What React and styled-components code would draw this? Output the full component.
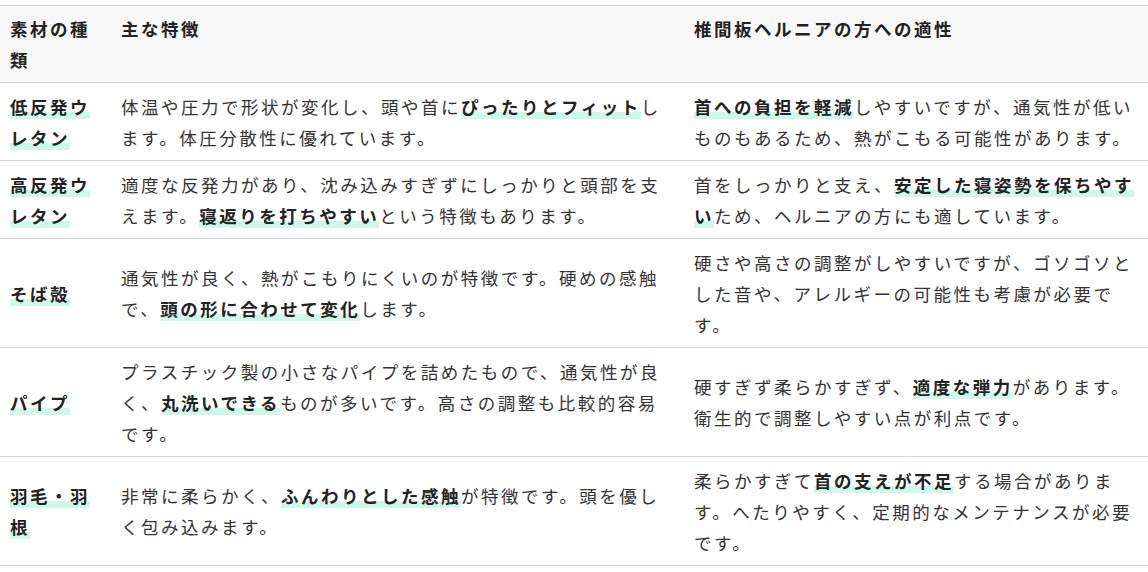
import React from 'react';
import styled, { createGlobalStyle } from 'styled-components';

const Global = createGlobalStyle`
  body {
    margin: 0;
    background: #fff;
    font-family: "Noto Sans CJK JP", "Noto Sans", sans-serif;
  }
`;

const Wrap = styled.div`
  padding-top: 5px;
`;

const Table = styled.table`
  width: 100%;
  table-layout: fixed;
  border-collapse: collapse;
  font-size: 17.5px;
  line-height: 31px;
  letter-spacing: 2.5px;
  color: #333;
`;

const Col = styled.col`
  width: ${props => props.w}px;
`;

const Head = styled.th`
  background: #f8f8f8;
  border-top: 1px solid #d6d6d6;
  border-bottom: 1px solid #d6d6d6;
  padding: 7px 10px 7px;
  text-align: left;
  vertical-align: top;
  font-weight: bold;
  color: #222;
`;

const Cell = styled.td`
  border-bottom: 1px solid #d6d6d6;
  padding: 7.5px 10px;
  vertical-align: middle;
  font-weight: ${props => props.name ? 'bold' : 'normal'};
  color: ${props => props.name ? '#222' : '#333'};
`;

const Mark = styled.strong`
  font-weight: bold;
  color: #222;
  background: linear-gradient(transparent 72%, #cff7ea 72%);
`;

const rows = [
  {
    name: '低反発ウレタン',
    feature: <>体温や圧力で形状が変化し、頭や首に<Mark>ぴったりとフィット</Mark>します。体圧分散性に優れています。</>,
    fit: <><Mark>首への負担を軽減</Mark>しやすいですが、通気性が低いものもあるため、熱がこもる可能性があります。</>,
  },
  {
    name: '高反発ウレタン',
    feature: <>適度な反発力があり、沈み込みすぎずにしっかりと頭部を支えます。<Mark>寝返りを打ちやすい</Mark>という特徴もあります。</>,
    fit: <>首をしっかりと支え、<Mark>安定した寝姿勢を保ちやすい</Mark>ため、ヘルニアの方にも適しています。</>,
  },
  {
    name: 'そば殻',
    feature: <>通気性が良く、熱がこもりにくいのが特徴です。硬めの感触で、<Mark>頭の形に合わせて変化</Mark>します。</>,
    fit: <>硬さや高さの調整がしやすいですが、ゴソゴソとした音や、アレルギーの可能性も考慮が必要です。</>,
  },
  {
    name: 'パイプ',
    feature: <>プラスチック製の小さなパイプを詰めたもので、通気性が良く、<Mark>丸洗いできる</Mark>ものが多いです。高さの調整も比較的容易です。</>,
    fit: <>硬すぎず柔らかすぎず、<Mark>適度な弾力</Mark>があります。衛生的で調整しやすい点が利点です。</>,
  },
  {
    name: '羽毛・羽根',
    feature: <>非常に柔らかく、<Mark>ふんわりとした感触</Mark>が特徴です。頭を優しく包み込みます。</>,
    fit: <>柔らかすぎて<Mark>首の支えが不足</Mark>する場合があります。へたりやすく、定期的なメンテナンスが必要です。</>,
  },
];

export default function App() {
  return (
    <Wrap>
      <Global />
      <Table>
        <colgroup>
          <Col w={111} />
          <Col w={573} />
          <Col w={464} />
        </colgroup>
        <thead>
          <tr>
            <Head>素材の種類</Head>
            <Head>主な特徴</Head>
            <Head>椎間板ヘルニアの方への適性</Head>
          </tr>
        </thead>
        <tbody>
          {rows.map(row => (
            <tr key={row.name}>
              <Cell name={1}><Mark>{row.name}</Mark></Cell>
              <Cell>{row.feature}</Cell>
              <Cell>{row.fit}</Cell>
            </tr>
          ))}
        </tbody>
      </Table>
    </Wrap>
  );
}
